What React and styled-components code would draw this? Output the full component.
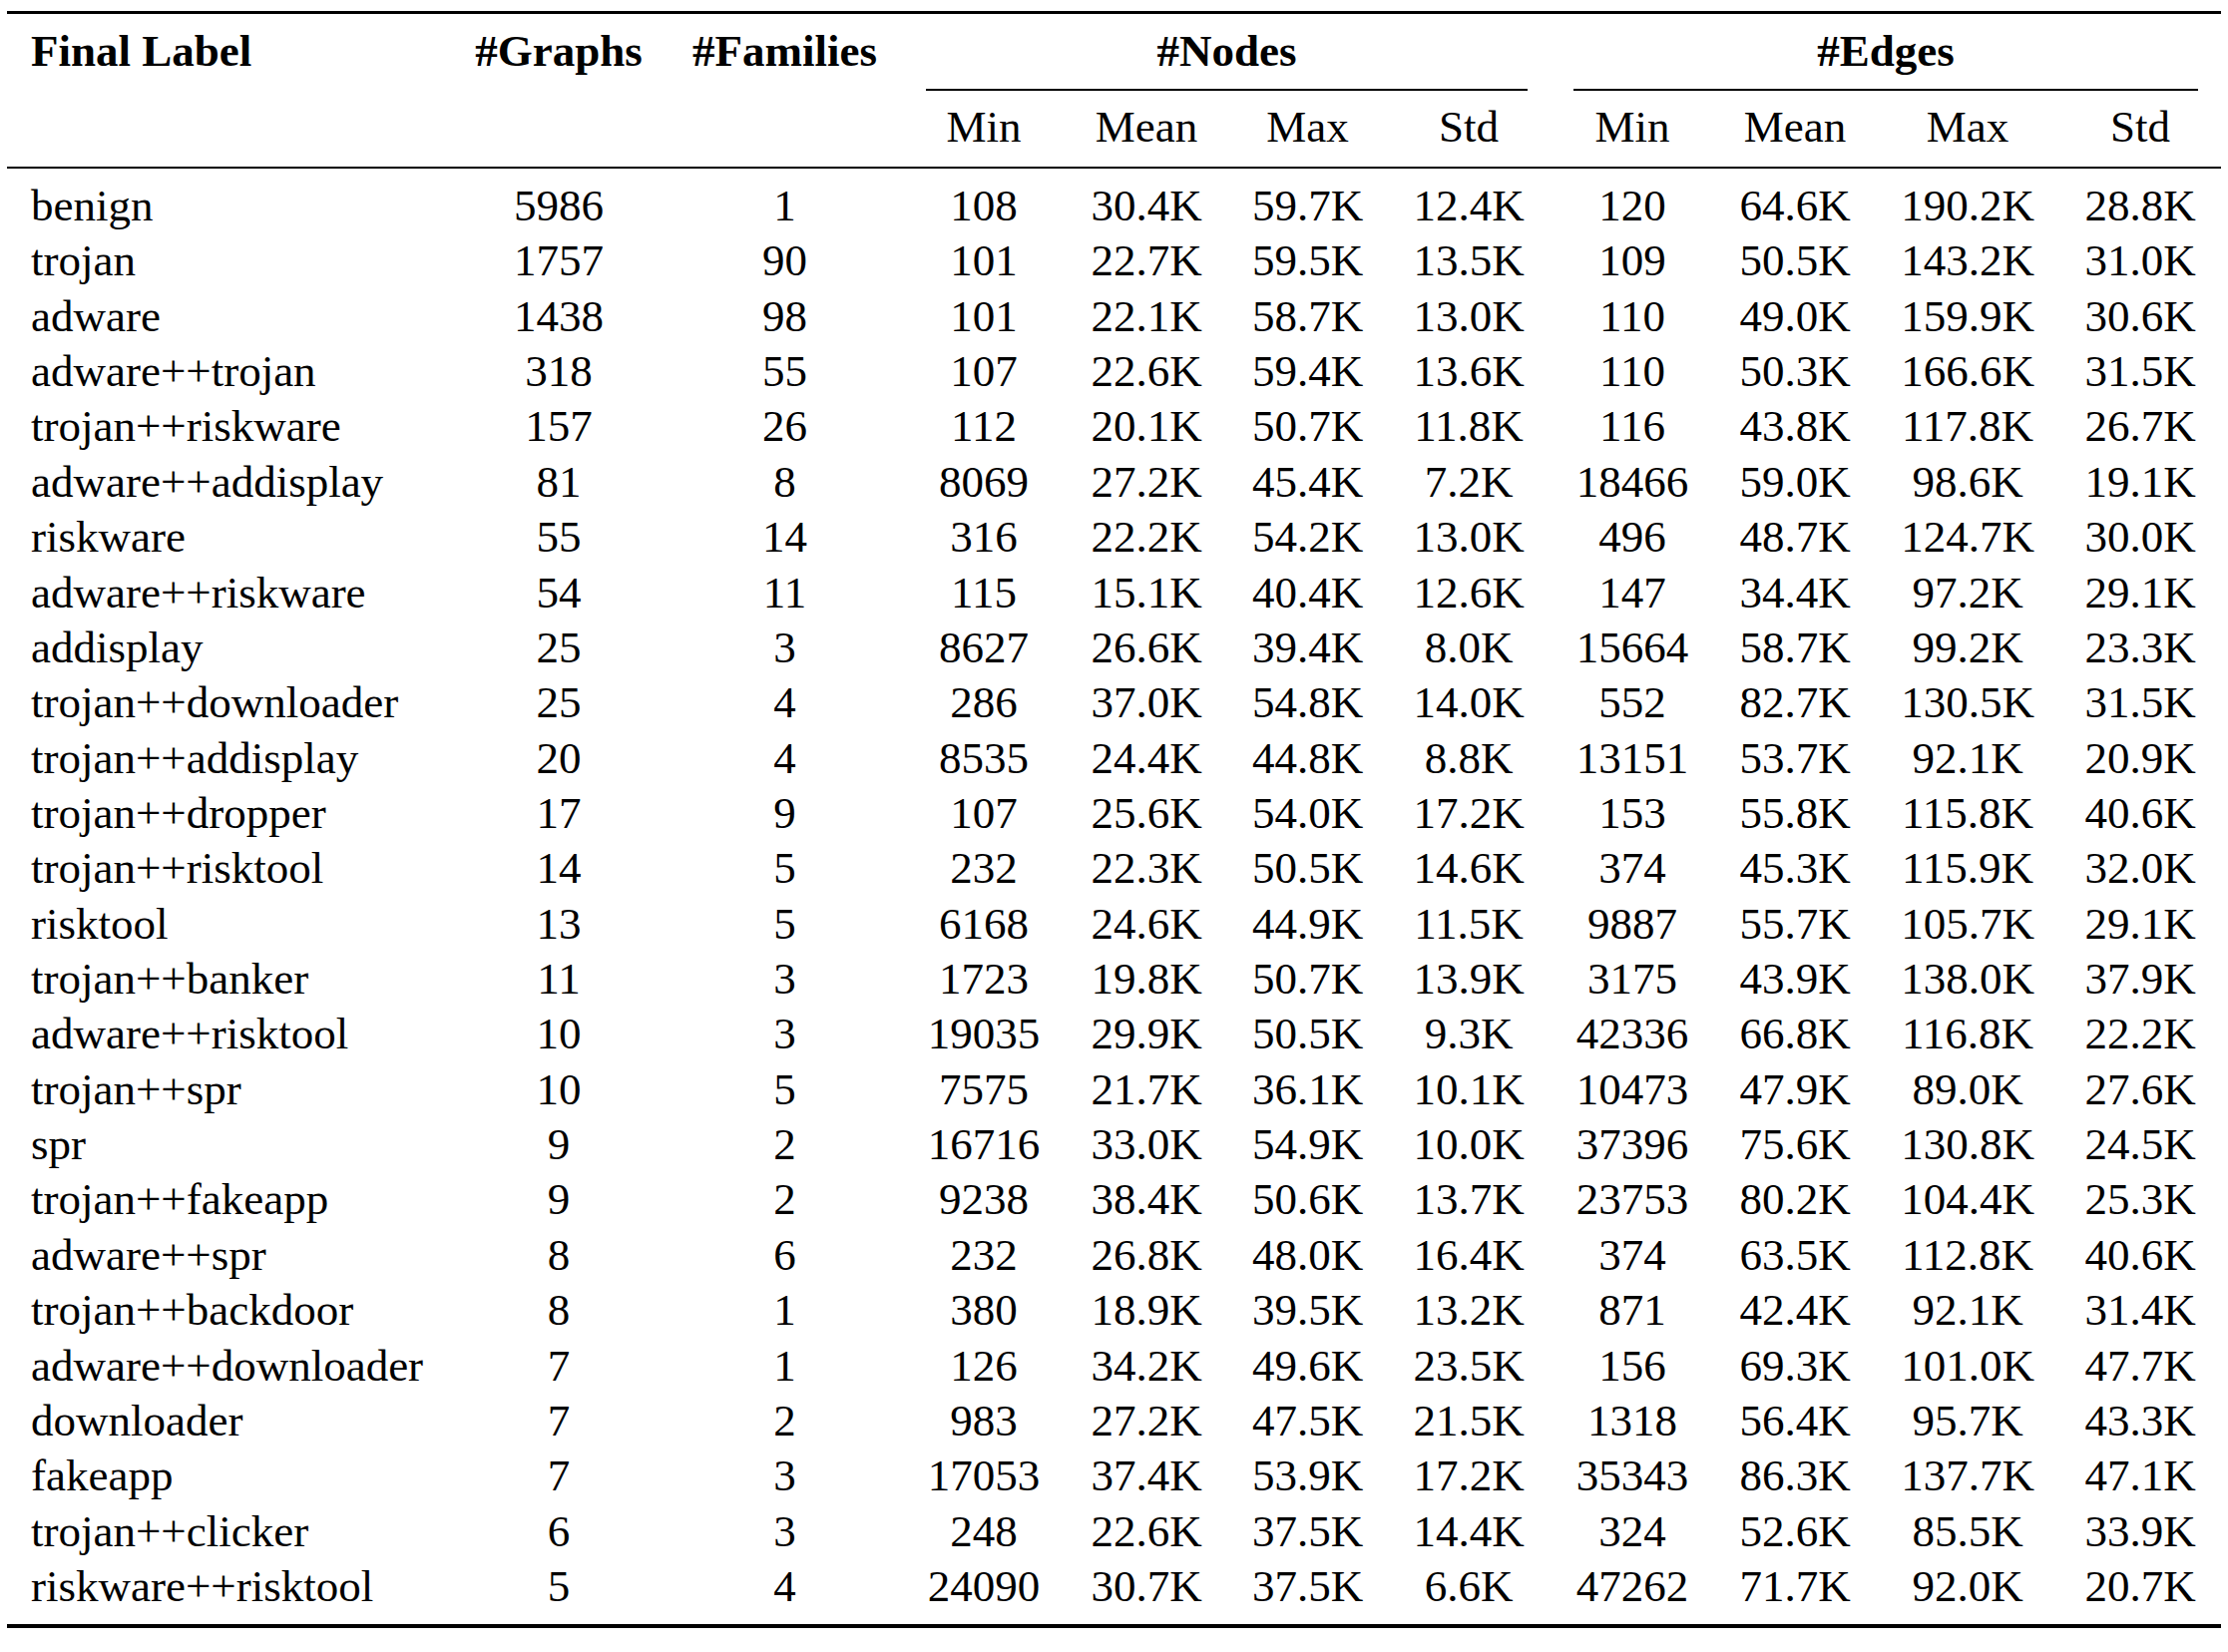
import React from "react";
import styled, { createGlobalStyle } from "styled-components";

const Global = createGlobalStyle`
  html, body { margin: 0; padding: 0; background: #fff; }
  body { font-family: "Liberation Serif", "Times New Roman", serif; }
`;

const COLS = [445, 216, 237, 162, 164, 159, 164, 164, 162, 184, 162];

const Table = styled.div`
  display: grid;
  grid-template-columns: ${COLS.map((c) => `${c}px`).join(" ")};
  margin: 11px 0 0 7px;
  width: 2219px;
  font-family: "Liberation Serif", "Times New Roman", serif;
  font-size: 45px;
  color: #000;
`;

const Rule = styled.div`
  grid-column: ${(p) => p.$span || "1 / -1"};
  height: ${(p) => p.$h}px;
  background: #000;
  margin: ${(p) => p.$mt || 0}px ${(p) => p.$trim || 0}px ${(p) => p.$mb || 0}px;
`;

const HeadCell = styled.div`
  grid-column: ${(p) => p.$span || "auto"};
  box-sizing: border-box;
  height: ${(p) => p.$h}px;
  padding-top: ${(p) => p.$pt}px;
  line-height: 55.36px;
  font-weight: ${(p) => (p.$bold ? 700 : 400)};
  text-align: ${(p) => (p.$left ? "left" : "center")};
  padding-left: ${(p) => (p.$left ? 24 : 0)}px;
  white-space: nowrap;
`;

const Cell = styled.div`
  height: 55.36px;
  line-height: 55.36px;
  text-align: ${(p) => (p.$left ? "left" : "center")};
  padding-left: ${(p) => (p.$left ? 24 : 0)}px;
  white-space: nowrap;
`;

const rows = [
  ["benign", "5986", "1", "108", "30.4K", "59.7K", "12.4K", "120", "64.6K", "190.2K", "28.8K"],
  ["trojan", "1757", "90", "101", "22.7K", "59.5K", "13.5K", "109", "50.5K", "143.2K", "31.0K"],
  ["adware", "1438", "98", "101", "22.1K", "58.7K", "13.0K", "110", "49.0K", "159.9K", "30.6K"],
  ["adware++trojan", "318", "55", "107", "22.6K", "59.4K", "13.6K", "110", "50.3K", "166.6K", "31.5K"],
  ["trojan++riskware", "157", "26", "112", "20.1K", "50.7K", "11.8K", "116", "43.8K", "117.8K", "26.7K"],
  ["adware++addisplay", "81", "8", "8069", "27.2K", "45.4K", "7.2K", "18466", "59.0K", "98.6K", "19.1K"],
  ["riskware", "55", "14", "316", "22.2K", "54.2K", "13.0K", "496", "48.7K", "124.7K", "30.0K"],
  ["adware++riskware", "54", "11", "115", "15.1K", "40.4K", "12.6K", "147", "34.4K", "97.2K", "29.1K"],
  ["addisplay", "25", "3", "8627", "26.6K", "39.4K", "8.0K", "15664", "58.7K", "99.2K", "23.3K"],
  ["trojan++downloader", "25", "4", "286", "37.0K", "54.8K", "14.0K", "552", "82.7K", "130.5K", "31.5K"],
  ["trojan++addisplay", "20", "4", "8535", "24.4K", "44.8K", "8.8K", "13151", "53.7K", "92.1K", "20.9K"],
  ["trojan++dropper", "17", "9", "107", "25.6K", "54.0K", "17.2K", "153", "55.8K", "115.8K", "40.6K"],
  ["trojan++risktool", "14", "5", "232", "22.3K", "50.5K", "14.6K", "374", "45.3K", "115.9K", "32.0K"],
  ["risktool", "13", "5", "6168", "24.6K", "44.9K", "11.5K", "9887", "55.7K", "105.7K", "29.1K"],
  ["trojan++banker", "11", "3", "1723", "19.8K", "50.7K", "13.9K", "3175", "43.9K", "138.0K", "37.9K"],
  ["adware++risktool", "10", "3", "19035", "29.9K", "50.5K", "9.3K", "42336", "66.8K", "116.8K", "22.2K"],
  ["trojan++spr", "10", "5", "7575", "21.7K", "36.1K", "10.1K", "10473", "47.9K", "89.0K", "27.6K"],
  ["spr", "9", "2", "16716", "33.0K", "54.9K", "10.0K", "37396", "75.6K", "130.8K", "24.5K"],
  ["trojan++fakeapp", "9", "2", "9238", "38.4K", "50.6K", "13.7K", "23753", "80.2K", "104.4K", "25.3K"],
  ["adware++spr", "8", "6", "232", "26.8K", "48.0K", "16.4K", "374", "63.5K", "112.8K", "40.6K"],
  ["trojan++backdoor", "8", "1", "380", "18.9K", "39.5K", "13.2K", "871", "42.4K", "92.1K", "31.4K"],
  ["adware++downloader", "7", "1", "126", "34.2K", "49.6K", "23.5K", "156", "69.3K", "101.0K", "47.7K"],
  ["downloader", "7", "2", "983", "27.2K", "47.5K", "21.5K", "1318", "56.4K", "95.7K", "43.3K"],
  ["fakeapp", "7", "3", "17053", "37.4K", "53.9K", "17.2K", "35343", "86.3K", "137.7K", "47.1K"],
  ["trojan++clicker", "6", "3", "248", "22.6K", "37.5K", "14.4K", "324", "52.6K", "85.5K", "33.9K"],
  ["riskware++risktool", "5", "4", "24090", "30.7K", "37.5K", "6.6K", "47262", "71.7K", "92.0K", "20.7K"],
];

const sub = ["Min", "Mean", "Max", "Std", "Min", "Mean", "Max", "Std"];

export default function App() {
  return (
    <>
      <Global />
      <Table>
        <Rule $h={3} />
        <HeadCell $h={75} $pt={10} $bold $left>Final Label</HeadCell>
        <HeadCell $h={75} $pt={10} $bold>#Graphs</HeadCell>
        <HeadCell $h={75} $pt={10} $bold>#Families</HeadCell>
        <HeadCell $h={75} $pt={10} $bold $span="4 / 8">#Nodes</HeadCell>
        <HeadCell $h={75} $pt={10} $bold $span="8 / 12">#Edges</HeadCell>
        <Rule $h={2} $span="4 / 8" $trim={23} />
        <Rule $h={2} $span="8 / 12" $trim={23} />
        <HeadCell $h={76} $pt={9} $span="1 / 4" />
        {sub.map((s, i) => (
          <HeadCell key={i} $h={76} $pt={9}>{s}</HeadCell>
        ))}
        <Rule $h={2} $mb={10} />
        {rows.map((r, ri) =>
          r.map((v, ci) => (
            <Cell key={`${ri}-${ci}`} $left={ci === 0}>{v}</Cell>
          ))
        )}
        <Rule $h={4} $mt={9.6} />
      </Table>
    </>
  );
}
